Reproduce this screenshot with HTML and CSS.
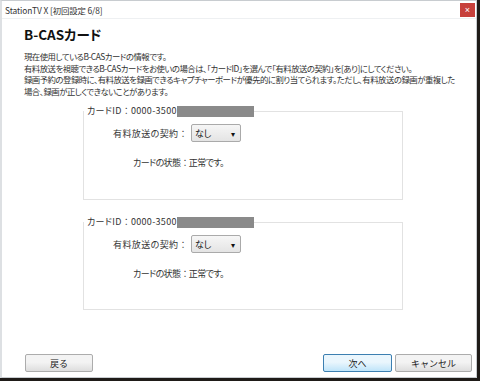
FILE: index.html
```html
<!DOCTYPE html>
<html lang="ja">
<head>
    <meta charset="UTF-8" />
    <title>StationTV X [初回設定 6/8]</title>
    <link rel="stylesheet" href="styles.css">
</head>
<body>
    <div class="window">
        <div class="titlebar">
            <span class="title">StationTV X [初回設定 6/8]</span>
            <button class="close">×</button>
        </div>

        <div class="content">
            <h1>B-CASカード</h1>
            <p class="intro">
                現在使用しているB-CASカードの情報です。<br>
                有料放送を視聴できるB-CASカードをお使いの場合は、「カードID」を選んで「有料放送の契約」を[あり]にしてください。<br>
                録画予約の登録時に、有料放送を録画できるキャプチャーボードが優先的に割り当てられます。ただし、有料放送の録画が重複した<br>
                場合、録画が正しくできないことがあります。
            </p>

            <fieldset class="card">
                <legend>カードID<span class="colon">：</span>0000-3500<span class="mask"></span></legend>
                <div class="row contract">
                    <label>有料放送の契約<span class="colon">：</span></label>
                    <div class="select">なし<span class="arrow">▾</span></div>
                </div>
                <div class="row status">カードの状態<span class="colon">：</span>正常です。</div>
            </fieldset>

            <fieldset class="card">
                <legend>カードID<span class="colon">：</span>0000-3500<span class="mask"></span></legend>
                <div class="row contract">
                    <label>有料放送の契約<span class="colon">：</span></label>
                    <div class="select">なし<span class="arrow">▾</span></div>
                </div>
                <div class="row status">カードの状態<span class="colon">：</span>正常です。</div>
            </fieldset>
        </div>

        <div class="footer">
            <button class="btn">戻る</button>
            <span class="spacer"></span>
            <button class="btn primary">次へ</button>
            <button class="btn">キャンセル</button>
        </div>
    </div>
</body>
</html>
```

FILE: styles.css
```css
* {
    box-sizing: border-box;
    margin: 0;
    padding: 0;
}

body {
    background: #1f1b18;
    width: 480px;
    height: 381px;
    overflow: hidden;
    font-family: "Noto Sans CJK JP", "Noto Sans", sans-serif;
    font-feature-settings: "palt";
    color: #222;
}

.window {
    width: 477px;
    height: 378px;
    background: #fff;
    border: 1px solid #c8ccd0;
    border-left: 2px solid #dde0e3;
    display: flex;
    flex-direction: column;
}

.titlebar {
    height: 18px;
    display: flex;
    align-items: center;
    padding-left: 3px;
    border-bottom: 1px solid #eef0f2;
}

.title {
    font-size: 8.4px;
    letter-spacing: -0.1px;
    color: #333;
}

.close {
    width: 15px;
    height: 14px;
    margin: 0 1px 0 auto;
    border: none;
    background: #c7403b;
    color: #fff;
    font-size: 9px;
    line-height: 14px;
}

.content {
    padding: 7px 0 0 22px;
}

h1 {
    font-size: 13.5px;
    font-weight: bold;
    line-height: 16px;
    color: #111;
    margin-bottom: 9px;
}

.intro {
    font-size: 8.4px;
    letter-spacing: -0.5px;
    line-height: 11.5px;
    color: #333;
}

.colon {
    font-feature-settings: normal;
}

.card {
    width: 320px;
    height: 95px;
    margin-left: 59px;
    border: 1px solid #e2e2e2;
    font-size: 9px;
    color: #333;
}

.card:first-of-type {
    margin-top: 8px;
}

.card + .card {
    margin-top: 16px;
    height: 94px;
}

.card legend {
    padding: 0 0 0 3px;
    margin-left: 0;
    line-height: 12px;
    letter-spacing: 0.3px;
    display: flex;
    align-items: center;
}

.mask {
    display: inline-block;
    width: 77px;
    height: 11px;
    background: #8a8a8a;
}

.row.contract {
    display: flex;
    align-items: center;
    margin-top: 7px;
    padding-left: 29px;
}

.contract label {
    margin-right: 3px;
    letter-spacing: 0.4px;
}

.select {
    width: 50px;
    height: 18px;
    border: 1px solid #aaa;
    border-radius: 2px;
    background: linear-gradient(#f6f6f6, #e4e4e4);
    display: flex;
    align-items: center;
    justify-content: space-between;
    padding: 0 5px 0 3px;
    color: #111;
}

.arrow {
    font-size: 8px;
}

.row.status {
    margin-top: 14px;
    padding-left: 49px;
    letter-spacing: -0.6px;
}

.footer {
    margin-top: auto;
    display: flex;
    padding: 0 4px 5px 23px;
}

.spacer {
    flex: 1;
}

.btn {
    width: 68px;
    height: 18px;
    border: 1px solid #acacac;
    border-radius: 2px;
    background: linear-gradient(#f3f3f3 45%, #dddddd);
    font-family: inherit;
    font-size: 9px;
    color: #222;
}

.btn.primary {
    width: 69px;
    margin-right: 3px;
    border-color: #3c7fb1;
    background: linear-gradient(#eaf6fd 45%, #bfe4f9);
}

.btn.primary + .btn {
    width: 77px;
}
```
